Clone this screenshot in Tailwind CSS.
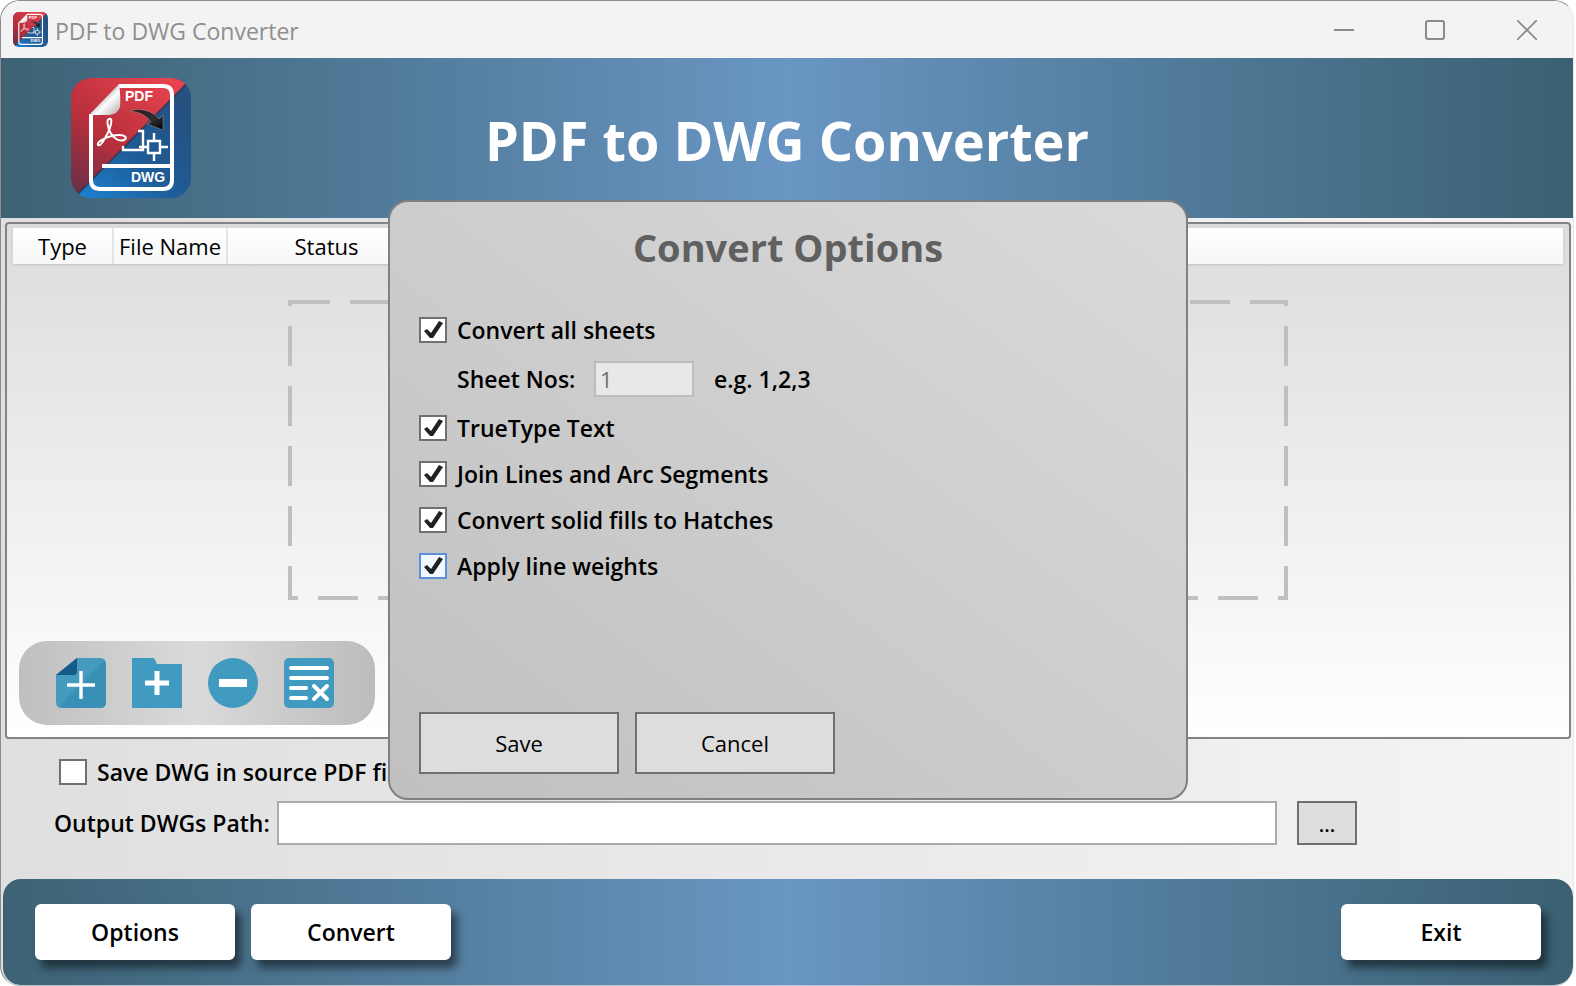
<!DOCTYPE html>
<html lang="en">
<head>
    <meta charset="UTF-8">
    <meta name="viewport" content="width=device-width, initial-scale=1.0">
    <title>PDF to DWG Converter</title>
    <script src="https://cdn.jsdelivr.net/npm/@tailwindcss/browser@4"></script>
</head>
<body class="bg-white font-['Open_Sans',sans-serif] text-black">
    <!-- Shared drawings -->
    <svg width="0" height="0" class="absolute" aria-hidden="true">
        <defs>
            <linearGradient id="logoBlue" x1="0" y1="1" x2="0.8" y2="0.1">
                <stop offset="0" stop-color="#1b86d6"/>
                <stop offset="0.5" stop-color="#1f5c97"/>
                <stop offset="1" stop-color="#25507f"/>
            </linearGradient>
            <linearGradient id="logoRed" x1="0.8" y1="0" x2="0" y2="1">
                <stop offset="0" stop-color="#e8434f"/>
                <stop offset="0.55" stop-color="#b82f3c"/>
                <stop offset="1" stop-color="#5c3048"/>
            </linearGradient>
            <linearGradient id="logoFold" x1="0" y1="0" x2="1" y2="1">
                <stop offset="0.3" stop-color="#8f8f8f"/>
                <stop offset="0.6" stop-color="#ffffff"/>
                <stop offset="1" stop-color="#a8a8a8"/>
            </linearGradient>
            <linearGradient id="logoArrow" x1="0" y1="0" x2="1" y2="1">
                <stop offset="0" stop-color="#3a1216"/>
                <stop offset="0.6" stop-color="#2e2e2e"/>
                <stop offset="1" stop-color="#000000"/>
            </linearGradient>
            <clipPath id="logoShape"><rect width="120" height="120" rx="20"/></clipPath>
        </defs>
        <symbol id="logo" viewBox="0 0 120 120">
            <g clip-path="url(#logoShape)">
                <rect width="120" height="120" fill="url(#logoBlue)"/>
                <path d="M0 0H120L115 6L7 116L0 122Z" fill="url(#logoRed)"/>
                <path d="M120 1L4 119" stroke="#1c2c48" stroke-opacity="0.5" stroke-width="2"/>
            </g>
            <path d="M48 8H92Q101 8 101 17V102Q101 111 92 111H29Q20 111 20 102V36" fill="none" stroke="#fff" stroke-width="4"/>
            <path d="M31 88H101" stroke="#fff" stroke-width="4"/>
            <path d="M18 37L48 6Q50 20 49 29Q47 36 38 37Z" fill="url(#logoFold)"/>
            <path d="M38 41C35 42 37 49 39 54C42 60 48 64 53 62C57 60 54 57 48 57C40 57 31 61 28 64C25 67 28 69 31 65C35 59 39 51 40 46C41 42 40 40 38 41Z" fill="none" stroke="#fff" stroke-width="2"/>
            <path d="M67 53H72V72H52V68M68 69H77M77 63H89V75H77ZM89 69H97M83 55V63M83 75V83" fill="none" stroke="#fff" stroke-width="2.4"/>
            <path d="M59 33C69 29 82 33 88 41L92 37L92 52L76 46L80 44C75 37 68 34 59 33Z" fill="url(#logoArrow)" stroke="#a9b0b8" stroke-opacity="0.6" stroke-width="0.7"/>
        </symbol>
        <symbol id="check" viewBox="0 0 28 26">
            <path d="M5 14L8 12L12 16L20 4L24 6L14 21L11 21Z" fill="#212121"/>
        </symbol>
    </svg>

    <div class="relative mr-[2px] flex min-h-screen flex-col overflow-hidden rounded-[20px] border border-[#8c8c8c] border-r-[#e8e8e8] border-b-[#b5c4cf] bg-linear-to-r from-[#dfdfdf] to-[#f4f4f4]">
        <!-- Title bar -->
        <header class="flex h-[57px] shrink-0 items-center bg-[#f3f3f3] pl-3">
            <svg viewBox="0 0 120 120" class="size-[35px] shrink-0" role="img" aria-label="Application icon">
                <use href="#logo" width="120" height="120"/>
                <g font-family="Liberation Sans, sans-serif" font-size="14" font-weight="700" fill="#fff">
                    <text x="54" y="23">PDF</text>
                    <text x="60" y="104">DWG</text>
                </g>
            </svg>
            <span class="ml-[7px] pt-[2px] text-[23px]/[30px] text-[#8f8f8f]">PDF to DWG Converter</span>
            <div class="ml-auto flex h-full text-[#8a8a8a]">
                <button type="button" aria-label="Minimize" class="flex w-[91px] items-center justify-center">
                    <svg width="20" height="20" viewBox="0 0 20 20"><path d="M0 10H20" stroke="currentColor" stroke-width="2"/></svg>
                </button>
                <button type="button" aria-label="Maximize" class="flex w-[92px] items-center justify-center">
                    <svg width="20" height="20" viewBox="0 0 20 20"><rect x="1" y="1" width="18" height="18" rx="2" fill="none" stroke="currentColor" stroke-width="2"/></svg>
                </button>
                <button type="button" aria-label="Close" class="flex w-[92px] items-center justify-center">
                    <svg width="20" height="20" viewBox="0 0 20 20"><path d="M0 0L20 20M20 0L0 20" stroke="currentColor" stroke-width="1.7"/></svg>
                </button>
            </div>
        </header>

        <!-- Banner -->
        <div class="grid h-[160px] shrink-0 grid-cols-[1fr_auto_1fr] items-center bg-linear-to-r from-[#3c6274] via-[#6996c3] to-[#3a6072]">
            <svg viewBox="0 0 120 120" class="ml-[70px] size-[120px]" role="img" aria-label="PDF to DWG logo">
                <use href="#logo" width="120" height="120"/>
                <g font-family="Liberation Sans, sans-serif" font-size="14" font-weight="700" fill="#fff">
                    <text x="54" y="23">PDF</text>
                    <text x="60" y="104">DWG</text>
                </g>
            </svg>
            <h1 class="pt-1 text-[54px] leading-[64px] font-bold text-white">PDF to DWG Converter</h1>
        </div>

        <!-- File list -->
        <main class="mt-1 mr-[2px] ml-1 flex flex-1 flex-col rounded-[4px] border-2 border-[#828287] bg-linear-to-b from-[#dcdcdc] to-white px-[6px] pt-1">
            <table class="w-full table-fixed">
                <thead>
                    <tr class="h-[36px] bg-linear-to-b from-white to-[#f7f7f7] text-[22px] leading-[30px] shadow-sm">
                        <th class="w-[100px] border-r-2 border-[#e4e4e4] font-normal">Type</th>
                        <th class="w-[114px] border-r-2 border-[#e4e4e4] font-normal whitespace-nowrap">File Name</th>
                        <th class="w-[198px] font-normal">Status</th>
                        <th></th>
                    </tr>
                </thead>
            </table>
            <div class="mt-9 flex justify-center">
                <svg width="1000" height="300" viewBox="0 0 1000 300" class="shrink-0">
                    <rect x="2" y="2" width="996" height="296" fill="none" stroke="#bfbfbf" stroke-width="4" stroke-dasharray="40 20"/>
                </svg>
            </div>
            <div class="mt-auto mb-3 ml-[6px] flex h-[84px] w-[356px] items-center gap-[26px] rounded-[28px] bg-linear-to-r from-[#bfbfbf] via-[#dadada] to-[#bcbcbc] pl-[37px]">
                <button type="button" aria-label="Add file" class="size-[50px]">
                    <svg width="50" height="50" viewBox="0 0 50 50">
                        <path d="M21 0H44Q50 0 50 6V44Q50 50 44 50H6Q0 50 0 44V17Z" fill="#449bbf"/>
                        <path d="M4 47L48 3Q50 4 50 8V44Q50 50 44 50H6Z" fill="#3990b6"/>
                        <path d="M21 0V13Q21 17 17 17H0Z" fill="#165a8a"/>
                        <path d="M11 27H39M25 13V41" stroke="#fff" stroke-width="3.4"/>
                    </svg>
                </button>
                <button type="button" aria-label="Add folder" class="size-[50px]">
                    <svg width="50" height="50" viewBox="0 0 50 50">
                        <path d="M0 0H22L25 6H50V50H0Z" fill="#419ac0"/>
                        <path d="M13 25H37M25 13V37" stroke="#fff" stroke-width="5"/>
                    </svg>
                </button>
                <button type="button" aria-label="Remove file" class="size-[50px]">
                    <svg width="50" height="50" viewBox="0 0 50 50">
                        <circle cx="25" cy="25" r="25" fill="#419ac0"/>
                        <rect x="11" y="21" width="28" height="8" fill="#fff"/>
                    </svg>
                </button>
                <button type="button" aria-label="Clear list" class="size-[50px]">
                    <svg width="50" height="50" viewBox="0 0 50 50">
                        <rect width="50" height="50" rx="5" fill="#419ac0"/>
                        <path d="M7 10H43M7 20H43M7 30H22M7 40H22M30 28L43 41M43 28L30 41" stroke="#fff" stroke-width="4" stroke-linecap="round"/>
                    </svg>
                </button>
            </div>
        </main>

        <!-- Output settings -->
        <section class="shrink-0 pt-[13px] pb-[34px]">
            <label class="ml-[58px] flex h-[40px] w-max items-center gap-[10px] text-[23px] font-semibold">
                <span class="relative flex">
                    <input type="checkbox" class="peer h-[26px] w-[28px] appearance-none border-2 border-[#707070] bg-white">
                    <svg class="pointer-events-none absolute inset-0 hidden h-[26px] w-[28px] peer-checked:block"><use href="#check"/></svg>
                </span>
                Save DWG in source PDF file folder
            </label>
            <div class="mt-[9px] mr-[216px] ml-[53px] flex h-[44px] items-center">
                <label for="outputPath" class="w-[223px] shrink-0 text-[23px] font-semibold">Output DWGs Path:</label>
                <input id="outputPath" type="text" class="h-full min-w-0 flex-1 border-2 border-[#ababab] bg-white px-2 text-[22px]">
                <button type="button" aria-label="Browse" class="ml-5 h-full w-[60px] border-2 border-[#707070] bg-[#dddddd] pt-1 text-[20px] font-semibold">...</button>
            </div>
        </section>

        <!-- Action bar -->
        <footer class="ml-[2px] flex h-[106px] shrink-0 items-center gap-4 rounded-[18px] bg-linear-to-r from-[#3c6274] via-[#6996c3] to-[#3a6072] px-8 text-[23px] font-semibold">
            <button type="button" id="optionsButton" class="h-[56px] w-[200px] rounded-[6px] bg-white shadow-[6px_8px_8px_rgba(0,0,0,0.5)]">Options</button>
            <button type="button" class="h-[56px] w-[200px] rounded-[6px] bg-white shadow-[6px_8px_8px_rgba(0,0,0,0.5)]">Convert</button>
            <button type="button" class="ml-auto h-[56px] w-[200px] rounded-[6px] bg-white shadow-[6px_8px_8px_rgba(0,0,0,0.5)]">Exit</button>
        </footer>

        <!-- Options dialog -->
        <div id="optionsDialog" class="pointer-events-none absolute top-[199px] right-0 left-[2px] flex justify-center">
            <form role="dialog" aria-labelledby="optionsTitle" class="pointer-events-auto flex h-[600px] w-[800px] flex-col rounded-[20px] border-2 border-[#808080] bg-linear-to-tr from-[#c0c0c0] to-[#dadada] px-[29px] pb-[24px] text-[23px] font-semibold">
                <h2 id="optionsTitle" class="mt-5 mb-[35px] text-center text-[38px] leading-[50px] font-bold text-[#606060]">Convert Options</h2>
                <label class="flex h-[46px] w-max items-center gap-[10px]">
                    <span class="relative flex">
                        <input type="checkbox" id="allSheets" checked class="peer h-[26px] w-[28px] appearance-none border-2 border-[#707070] bg-white">
                        <svg class="pointer-events-none absolute inset-0 hidden h-[26px] w-[28px] peer-checked:block"><use href="#check"/></svg>
                    </span>
                    Convert all sheets
                </label>
                <div class="flex h-[52px] items-center pl-[38px]">
                    <label for="sheetNos" class="w-[137px]">Sheet Nos:</label>
                    <input id="sheetNos" type="text" value="1" disabled class="h-[36px] w-[100px] border-2 border-[#bcbcbc] bg-[#e8e8e8] px-1 text-[22px] font-normal text-[#707070]">
                    <span class="ml-5">e.g. 1,2,3</span>
                </div>
                <label class="flex h-[46px] w-max items-center gap-[10px]">
                    <span class="relative flex">
                        <input type="checkbox" checked class="peer h-[26px] w-[28px] appearance-none border-2 border-[#707070] bg-white">
                        <svg class="pointer-events-none absolute inset-0 hidden h-[26px] w-[28px] peer-checked:block"><use href="#check"/></svg>
                    </span>
                    TrueType Text
                </label>
                <label class="flex h-[46px] w-max items-center gap-[10px]">
                    <span class="relative flex">
                        <input type="checkbox" checked class="peer h-[26px] w-[28px] appearance-none border-2 border-[#707070] bg-white">
                        <svg class="pointer-events-none absolute inset-0 hidden h-[26px] w-[28px] peer-checked:block"><use href="#check"/></svg>
                    </span>
                    Join Lines and Arc Segments
                </label>
                <label class="flex h-[46px] w-max items-center gap-[10px]">
                    <span class="relative flex">
                        <input type="checkbox" checked class="peer h-[26px] w-[28px] appearance-none border-2 border-[#707070] bg-white">
                        <svg class="pointer-events-none absolute inset-0 hidden h-[26px] w-[28px] peer-checked:block"><use href="#check"/></svg>
                    </span>
                    Convert solid fills to Hatches
                </label>
                <label class="flex h-[46px] w-max items-center gap-[10px]">
                    <span class="relative flex">
                        <input type="checkbox" checked class="peer h-[26px] w-[28px] appearance-none border-2 border-[#5f8fd8] bg-[#f1f8ff]">
                        <svg class="pointer-events-none absolute inset-0 hidden h-[26px] w-[28px] peer-checked:block"><use href="#check"/></svg>
                    </span>
                    Apply line weights
                </label>
                <div class="mt-auto flex gap-4 text-[22px] font-normal">
                    <button type="button" class="h-[62px] w-[200px] border-2 border-[#707070] bg-[#dddddd]">Save</button>
                    <button type="button" class="h-[62px] w-[200px] border-2 border-[#707070] bg-[#dddddd]">Cancel</button>
                </div>
            </form>
        </div>
    </div>

    <script>
        // Sheet numbers can be typed only when not converting all sheets
        document.getElementById('allSheets').addEventListener('change', function(e) {
            document.getElementById('sheetNos').disabled = e.target.checked;
        });
    </script>
</body>
</html>
